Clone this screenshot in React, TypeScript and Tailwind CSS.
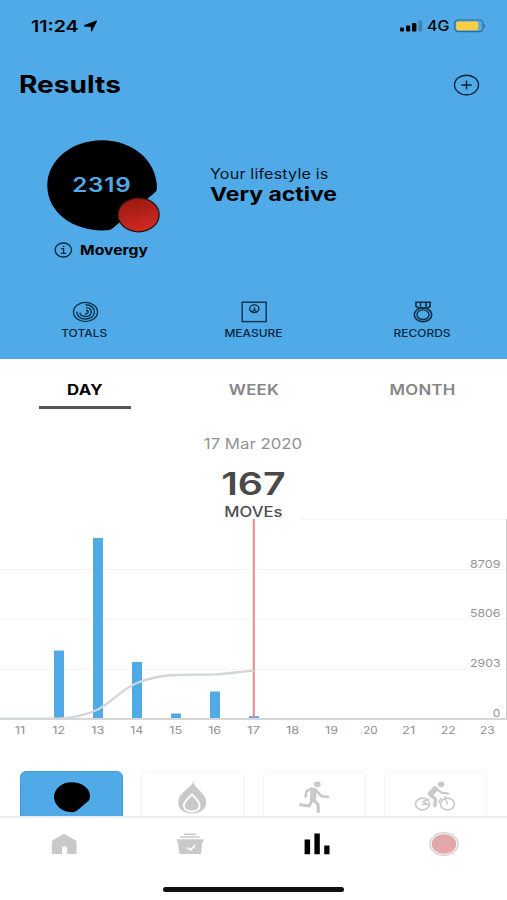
import { ReactNode } from "react";

type Tab = { label: string; active?: boolean };

const TABS: Tab[] = [{ label: "DAY", active: true }, { label: "WEEK" }, { label: "MONTH" }];

const BARS = [
  { x: 59, top: 650.5 },
  { x: 98, top: 538 },
  { x: 137, top: 662 },
  { x: 176, top: 713.5 },
  { x: 215, top: 691.5 },
  { x: 254, top: 716.2 },
];

const HOURS = [11, 12, 13, 14, 15, 16, 17, 18, 19, 20, 21, 22, 23];

const LEVELS = [
  { y: 567.5, value: "8709", x: 470, w: 30.5 },
  { y: 617.2, value: "5806", x: 470, w: 30.5 },
  { y: 667.4, value: "2903", x: 470, w: 30.5 },
  { y: 717, value: "0", x: 492.7, w: 7.5 },
];

function StatusBar() {
  return (
    <div className="flex h-[52px] items-center justify-between pl-[31px] pr-[21px]">
      <div className="flex items-center">
        <span className="w-[53px] text-[16px] leading-5 font-semibold">
          <span className="inline-block origin-left scale-x-[1.22]">11:24</span>
        </span>
        <svg width="14" height="13" viewBox="0 0 14 13">
          <path d="M0.5 5 L12.3 0.6 Q13.4 0.4 12.9 1.4 L8 11.2 Q7.3 12.1 7 11 L6.7 6.8 L0.8 6.7 Q-0.6 6 0.5 5Z" />
        </svg>
      </div>
      <div className="flex items-center">
        <svg width="24" height="12" viewBox="0 0 24 12">
          <rect x="0" y="7.4" width="4" height="4" rx="1" />
          <rect x="6" y="5.4" width="4.2" height="6" rx="1" />
          <rect x="12" y="3" width="4.4" height="8.4" rx="1" />
          <rect x="18.3" y="0.5" width="4" height="10.9" rx="1" fillOpacity="0.22" />
        </svg>
        <span className="ml-[3px] w-[27px] text-[14.5px] leading-5 font-medium">
          <span className="inline-block origin-left scale-x-[1.1]">4G</span>
        </span>
        <svg width="32" height="14" viewBox="0 0 32 14">
          <rect x="0.7" y="1" width="28.4" height="11.6" rx="3.6" fill="none" stroke="#000" strokeOpacity="0.38" strokeWidth="1.2" />
          <rect x="2.2" y="2.5" width="22.2" height="8.7" rx="1.8" fill="#f7cd46" />
          <path d="M30.2 4.6 Q31.8 6.8 30.2 9Z" fillOpacity="0.45" />
        </svg>
      </div>
    </div>
  );
}

function MovergyBlob() {
  return (
    <div className="relative h-[94px] w-[114px]">
      <svg width="114" height="94" viewBox="0 0 114 94">
        <defs>
          <linearGradient id="red" x1="0.3" y1="0" x2="0.6" y2="1">
            <stop offset="0" stopColor="#97190f" />
            <stop offset="1" stopColor="#d22a24" />
          </linearGradient>
        </defs>
        <path d="M55 0.3 C86 0.3 110 21 110 48 Q110 51 107.5 52.8 L66 88 Q63.5 90.2 60 90.3 C27 92 0.3 73 0.3 45.5 C0.3 20 25 0.3 55 0.3Z" />
        <ellipse cx="91.5" cy="74.8" rx="20.6" ry="17" fill="url(#red)" stroke="#26120f" strokeWidth="1.3" />
      </svg>
      <span className="absolute top-[33px] left-0 w-[110px] text-center text-[19.5px] leading-6 font-semibold text-[#4faae6]">
        <span className="inline-block scale-x-[1.24] tracking-[0.6px]">2319</span>
      </span>
    </div>
  );
}

function HeaderAction({ label, children }: { label: string; children: ReactNode }) {
  return (
    <div className="flex flex-1 flex-col items-center text-[#0b2f47]">
      <svg width="28" height="24" viewBox="0 0 28 24" fill="none" stroke="currentColor" strokeWidth="1.4">
        {children}
      </svg>
      <span className="mt-[2px] scale-x-[1.14] text-[10.5px] leading-4 font-medium text-[#08273d]">{label}</span>
    </div>
  );
}

function Header() {
  return (
    <header className="h-[359px] shrink-0 bg-[#4faae7]">
      <StatusBar />
      <div className="flex h-[66px] items-center justify-between pr-[27px] pl-[19px]">
        <h1 className="origin-left scale-x-[1.17] text-[24px] font-bold">Results</h1>
        <svg width="27" height="22" viewBox="0 0 27 22" fill="none" stroke="#06263c" strokeWidth="1.4">
          <ellipse cx="13.5" cy="11" rx="12" ry="9.8" />
          <path d="M8.3 11h10.4M13.5 6.6v8.8" />
        </svg>
      </div>

      <div className="flex h-[182px] pt-[22px]">
        <div className="ml-[47px] w-[163px]">
          <MovergyBlob />
          <div className="mt-2 flex items-center pl-[7px]">
            <svg width="19" height="16" viewBox="0 0 19 16" fill="none" stroke="#06263c" strokeWidth="1.3">
              <ellipse cx="9.3" cy="8" rx="8.2" ry="7" />
              <path d="M7 6.7h2.6v4.7M6.8 11.4h5.4M8.7 4.3h1.6" />
            </svg>
            <span className="ml-[7px] origin-left scale-x-[1.21] text-[13px] leading-4 font-bold">Movergy</span>
          </div>
        </div>
        <div className="pt-[25px]">
          <p className="origin-left scale-x-[1.15] text-[14px] leading-[18px] tracking-[0.15px] text-[#04121d]">Your lifestyle is</p>
          <p className="origin-left scale-x-[1.21] text-[19px] leading-[23px] font-bold">Very active</p>
        </div>
      </div>

      <div className="flex">
        {/* open rings, each one starting at the top and trailing off to the left */}
        <HeaderAction label="TOTALS">
          <ellipse cx="14.5" cy="12" rx="12" ry="9.6" />
          <path d="M14.5 4.8 C20 4.8 23.4 8 23.4 12 C23.4 16.4 19.4 19 14.5 19 C9.5 19 5.8 16 5.8 11.8" />
          <path d="M15 7.6 C18.4 7.8 20.3 9.8 20.3 12 C20.3 14.8 17.8 16.4 14.8 16.4 C11.6 16.4 9.2 14.9 8.8 12.6" />
          <path d="M15 10.3 C16.6 10.5 17.2 11.2 17.2 12.2 C17.2 13.3 15.8 13.9 14 13.7" />
        </HeaderAction>
        <HeaderAction label="MEASURE">
          <rect x="2.2" y="2.2" width="24" height="19.4" />
          <ellipse cx="14.3" cy="8.7" rx="4.6" ry="3.8" />
          <path d="M10.8 11.3h2.4l1.4-3 .8 3h2.5M14.4 9.2v-2" strokeWidth="1.1" />
        </HeaderAction>
        <HeaderAction label="RECORDS">
          <path d="M7 2.2h14.2v4.2l-3 1.6H10L7 6.4zM11.5 2.2v4.5M17 2.2v4.5" strokeWidth="1.6" />
          <ellipse cx="14" cy="14.7" rx="8.7" ry="6.9" strokeWidth="1.6" />
          <ellipse cx="14" cy="14.7" rx="6" ry="4.8" />
        </HeaderAction>
      </div>
    </header>
  );
}

function PeriodTabs() {
  return (
    <nav className="flex h-[50px] shrink-0">
      {TABS.map((t) => (
        <div key={t.label} className="flex flex-1 flex-col items-center">
          <span
            className={`mt-[21px] scale-x-[1.2] text-[14px] leading-5 tracking-[0.2px] ${
              t.active ? "font-bold text-black" : "font-semibold text-[#868686]"
            }`}
          >
            {t.label}
          </span>
          {t.active && <span className="mt-1.5 h-[3px] w-[92px] bg-[#575556]" />}
        </div>
      ))}
    </nav>
  );
}

function Chart() {
  return (
    <svg className="block shrink-0" width="507" height="222" viewBox="0 519 507 222" fontFamily="Inter, sans-serif">
      <path d="M300 519.5H507M0 569.5H507M0 619.2H507M0 669.3H507" stroke="#f3f4f4" />
      <path d="M506.5 519V719" stroke="#c6c6c6" />
      {BARS.map((b) => (
        <rect key={b.x} x={b.x - 5} y={b.top} width="10" height={719 - b.top} fill="#4faae6" />
      ))}
      <path d="M0 719H507" stroke="#d6d7d8" strokeWidth="1.8" />
      <path d="M253.8 519V718" stroke="#ed8690" strokeWidth="2" />
      <path
        d="M0 718.6 H59 C76 717.5 86 715 98 709.5 C112 702 122 689 137 683 C151 677 163 675.5 176 675 C190 674.2 203 674.9 215 674.4 C229 673.5 240 671.6 254 670.6"
        fill="none"
        stroke="#d3d6d7"
        strokeWidth="2.4"
      />
      {LEVELS.map((l) => (
        <text key={l.value} x={l.x} y={l.y} fontSize="11" fill="#959595" textLength={l.w} lengthAdjust="spacingAndGlyphs">
          {l.value}
        </text>
      ))}
      {HOURS.map((h, i) => (
        <text
          key={h}
          x={(h === 11 ? 14.8 : h < 20 ? 13.4 : 12.6) + i * 38.95}
          y="733.6"
          fontSize="10.5"
          fill="#8f8f8f"
          textLength={h === 11 ? 10.5 : h === 21 || h < 20 ? 13 : 14.5}
          lengthAdjust="spacingAndGlyphs"
        >
          {h}
        </text>
      ))}
    </svg>
  );
}

function ActivityCards() {
  return (
    <div className="grid h-[45px] shrink-0 grid-cols-4 gap-[18px] overflow-hidden px-5 *:flex *:h-[60px] *:items-start *:justify-center *:rounded-[6px] *:border *:border-[#f4f4f4]">
      <div className="border-[#479bd4]! bg-[#4faae7] pt-[10px]">
        <svg width="36" height="31" viewBox="0 0 36 31">
          <path d="M17.5 0.2 C28 0.2 36 6 36 14 Q36 18 33.2 20 L23.5 28.3 Q21 30.2 17.5 30.2 C8 30.2 0 23 0 15 C0 6.5 8 0.2 17.5 0.2Z" />
        </svg>
      </div>
      <div className="pt-[9px]">
        <svg width="29" height="33" viewBox="0 0 29 33">
          <path
            d="M15.5 0.3 C15.5 3.5 17.5 5.5 20.5 8.5 C24.5 12.5 28.2 16 28.2 21.5 C28.2 28.5 22.3 32.5 14.2 32.5 C6 32.5 0.2 28.5 0.2 21.5 C0.2 16 3.5 12.8 7.5 9.3 C11.5 5.8 14.2 3.5 15.5 0.3Z"
            fill="#c9c9c9"
          />
          <path d="M14 13.4 C17 17 21.6 20 21.6 24.4 C21.6 28.6 18 30.5 14 30.5 C10 30.5 5.9 28.6 5.9 24.4 C5.9 20 11 17 14 13.4Z" fill="#c9c9c9" stroke="#fff" strokeWidth="1.9" />
        </svg>
      </div>
      <div className="pt-[9px]">
        <svg width="31" height="32" viewBox="137 77 93 96" fill="none" stroke="#c9c9c9" strokeLinecap="round" strokeLinejoin="round">
          <ellipse cx="192" cy="87" rx="10" ry="8.5" fill="#c9c9c9" stroke="none" />
          <path d="M157 124 L159 108 L174 100 L188 105 L204 122 L224 125" strokeWidth="8" />
          <path d="M181 107 L179 130" strokeWidth="19" />
          <path d="M141 148 L168 152 L177 133" strokeWidth="9" />
          <path d="M181 134 L194 147 L195 168" strokeWidth="10" />
        </svg>
      </div>
      <div className="pt-[9px]">
        <svg width="42" height="31" viewBox="486 77 125 93" fill="none" stroke="#c9c9c9" strokeLinecap="round" strokeLinejoin="round">
          <ellipse cx="567" cy="87" rx="10" ry="8.5" fill="#c9c9c9" stroke="none" />
          <ellipse cx="511" cy="146" rx="21" ry="17.5" strokeWidth="5" />
          <ellipse cx="586" cy="146" rx="21" ry="17.5" strokeWidth="5" />
          <path d="M549 101 L536 115" strokeWidth="17" />
          <path d="M553 101 L568 112 L588 115" strokeWidth="7" />
          <path d="M536 120 L550 131 L548 151" strokeWidth="10" />
          <path d="M511 147 H527 L512 139 L530 132 M566 130 L560 142 M578 124 L586 146" strokeWidth="4.5" />
        </svg>
      </div>
    </div>
  );
}

function BottomNav() {
  return (
    <footer className="flex h-[84px] shrink-0 flex-col items-center border-t-2 border-[#ececec] bg-white">
      <div className="grid h-[52px] w-full grid-cols-4 items-center *:flex *:justify-center">
        <div className="pl-[2px]">
          <svg width="26" height="22" viewBox="0 0 26 22" fill="#c9c9c9">
            <path d="M12.7 0.8 L25 7.5 Q25.5 8 25.5 9 V21 H16.2 V15 Q16 13.6 13.5 13.6 Q11.3 13.6 11.1 15 V21 H0.8 V9 Q0.8 8 1.4 7.5Z" />
          </svg>
        </div>
        <div>
          <svg width="28" height="22" viewBox="0 0 28 22" fill="#c9c9c9">
            <path d="M8 0.6h12v1.3H8zM4.3 3.2h19.5v1.5H4.3zM0.8 6.3h26.6v2.4h-.9l-1.3 11.1q-.2 1.2-1.6 1.2H4.8q-1.4 0-1.6-1.2L1.8 8.7h-1z" />
            <path d="M11.3 14.6l3 2.3 5-4.5" fill="none" stroke="#fff" strokeWidth="1.6" />
          </svg>
        </div>
        <div>
          <svg width="26" height="22" viewBox="0 0 26 22">
            <path d="M0.6 6.6h5.5v14.6H0.6zM10.4 0.5h5.4v20.7h-5.4zM20.2 12.6h5.3v8.6h-5.3z" />
          </svg>
        </div>
        <div>
          <svg width="32" height="26" viewBox="0 0 32 26">
            <defs>
              <linearGradient id="pink" x1="0" y1="0" x2="0" y2="1">
                <stop offset="0" stopColor="#d9a8a6" />
                <stop offset="1" stopColor="#eba8ac" />
              </linearGradient>
            </defs>
            <ellipse cx="16" cy="13" rx="14.4" ry="11.4" fill="#f3efef" stroke="#cbc5c5" />
            <ellipse cx="16" cy="13" rx="12.2" ry="9.8" fill="url(#pink)" />
          </svg>
        </div>
      </div>
      <div className="mt-[17px] h-[5px] w-[181px] rounded-full bg-[#111]" />
    </footer>
  );
}

export default function App() {
  return (
    <div className="flex h-[900px] w-[507px] flex-col overflow-hidden bg-white font-['Inter',sans-serif] text-black">
      <Header />
      <PeriodTabs />
      <section className="flex h-[110px] shrink-0 flex-col items-center pt-[25px]">
        <p className="scale-x-[1.2] text-[14px] leading-5 text-[#929292]">17 Mar 2020</p>
        <p className="mt-3 scale-x-[1.27] text-[31px] leading-9 font-semibold text-[#494949]">167</p>
        <p className="mt-px scale-x-[1.19] text-[14px] leading-[18px] font-medium text-[#4d4d4d]">MOVEs</p>
      </section>
      <Chart />
      <div className="h-[30px] shrink-0" />
      <ActivityCards />
      <BottomNav />
    </div>
  );
}
